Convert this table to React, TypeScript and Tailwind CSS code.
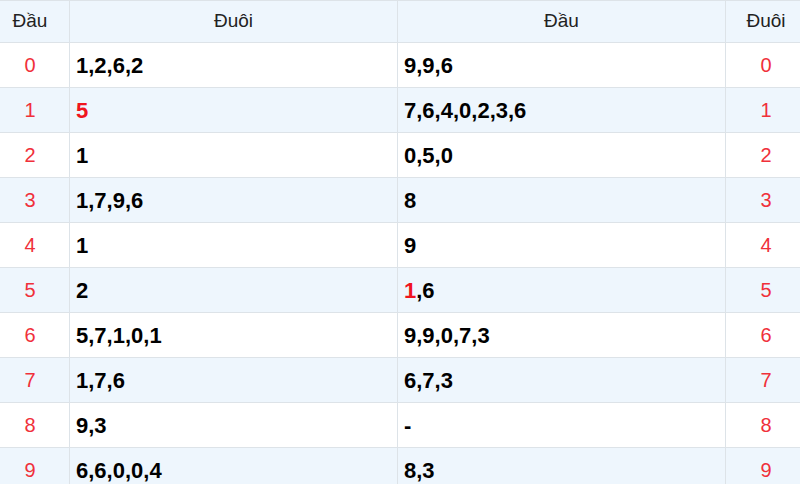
import React from 'react';

type Part = { v: string; red?: boolean };

const rows: { dau: number; duoi: Part[]; dau2: Part[] }[] = [
  { dau: 0, duoi: [{ v: '1,2,6,2' }], dau2: [{ v: '9,9,6' }] },
  { dau: 1, duoi: [{ v: '5', red: true }], dau2: [{ v: '7,6,4,0,2,3,6' }] },
  { dau: 2, duoi: [{ v: '1' }], dau2: [{ v: '0,5,0' }] },
  { dau: 3, duoi: [{ v: '1,7,9,6' }], dau2: [{ v: '8' }] },
  { dau: 4, duoi: [{ v: '1' }], dau2: [{ v: '9' }] },
  { dau: 5, duoi: [{ v: '2' }], dau2: [{ v: '1', red: true }, { v: ',6' }] },
  { dau: 6, duoi: [{ v: '5,7,1,0,1' }], dau2: [{ v: '9,9,0,7,3' }] },
  { dau: 7, duoi: [{ v: '1,7,6' }], dau2: [{ v: '6,7,3' }] },
  { dau: 8, duoi: [{ v: '9,3' }], dau2: [{ v: '-' }] },
  { dau: 9, duoi: [{ v: '6,6,0,0,4' }], dau2: [{ v: '8,3' }] },
];

const Parts = ({ parts }: { parts: Part[] }) => (
  <>
    {parts.map((p, i) => (
      <span key={i} className={p.red ? 'text-[#f0141e]' : 'text-black'}>
        {p.v}
      </span>
    ))}
  </>
);

export default function App() {
  return (
    <div className="w-[800px] h-[484px] overflow-hidden bg-white font-['Liberation_Sans',Arial,sans-serif]">
      <table className="-ml-[10px] w-[816px] table-fixed border-collapse">
        <colgroup>
          <col className="w-[79px]" />
          <col className="w-[328px]" />
          <col className="w-[328px]" />
          <col className="w-[81px]" />
        </colgroup>
        <thead>
          <tr className="h-[42px] bg-[#eef6fd] text-[19px] text-[#222]">
            <th className="border border-[#dde3e8] font-normal">Đầu</th>
            <th className="border border-[#dde3e8] font-normal">Đuôi</th>
            <th className="border border-[#dde3e8] font-normal">Đầu</th>
            <th className="border border-[#dde3e8] font-normal">Đuôi</th>
          </tr>
        </thead>
        <tbody>
          {rows.map((r, i) => (
            <tr key={r.dau} className={`h-[45px] ${i % 2 === 1 ? 'bg-[#eef6fd]' : 'bg-white'}`}>
              <td className="border border-[#dde3e8] text-center text-[20px] text-[#f0303a]">{r.dau}</td>
              <td className="border border-[#dde3e8] px-[6px] text-[22px] font-bold">
                <Parts parts={r.duoi} />
              </td>
              <td className="border border-[#dde3e8] px-[6px] text-[22px] font-bold">
                <Parts parts={r.dau2} />
              </td>
              <td className="border border-[#dde3e8] text-center text-[20px] text-[#f0303a]">{r.dau}</td>
            </tr>
          ))}
        </tbody>
      </table>
    </div>
  );
}
